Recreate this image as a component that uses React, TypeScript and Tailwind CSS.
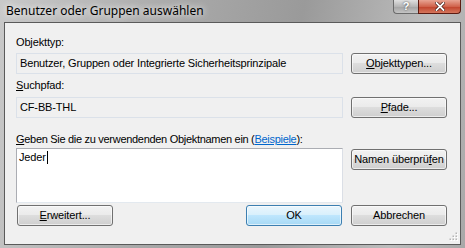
const ui = { fontFamily: '"Liberation Sans", Arial, sans-serif' };

const Btn = ({ children, primary }: { children: React.ReactNode; primary?: boolean }) => (
  <button
    className={
      primary
        ? "h-[21px] w-[96px] rounded-[3px] border border-[#3c7fb1] bg-[linear-gradient(#eaf6fd_0%,#d9f0fc_45%,#bee6fd_50%,#a7d9f5_100%)] text-[11px] leading-[13px] tracking-[-0.15px] text-black shadow-[inset_0_0_0_1px_rgba(255,255,255,0.6)]"
        : "h-[21px] w-[96px] rounded-[3px] border border-[#707070] bg-[linear-gradient(#f2f2f2_0%,#ebebeb_45%,#dddddd_50%,#cfcfcf_100%)] text-[11px] leading-[13px] tracking-[-0.15px] text-black shadow-[inset_0_0_0_1px_rgba(255,255,255,0.6)]"
    }
    style={ui}
  >
    {children}
  </button>
);

const Field = ({ text }: { text: string }) => (
  <div className="flex h-[21px] items-center border border-[#dbe1e9] bg-[#f0f0f0] px-[3px] text-[11px] text-black">
    {text}
  </div>
);

export default function App() {
  return (
    <div
      className="flex h-[248px] w-[465px] flex-col overflow-hidden bg-[linear-gradient(100deg,#c9c9c9_0%,#a9a9a9_35%,#9a9a9a_60%,#bdbdbd_85%,#a8a8a8_100%)]"
      style={ui}
    >
      {/* title bar */}
      <div className="flex h-[22px] shrink-0 items-start">
        <div
          className="pl-[6px] pt-[3px] text-[12px] leading-[15px] text-black [text-shadow:0_0_6px_rgba(255,255,255,0.9),0_0_10px_rgba(255,255,255,0.6)]"
          style={{ fontFamily: '"Noto Sans", "Open Sans", sans-serif' }}
        >
          Benutzer oder Gruppen auswählen
        </div>
        <div className="ml-auto mr-[4px] flex h-[14px]">
          <div className="flex w-[25px] items-center justify-center rounded-bl-[4px] border border-t-0 border-r-0 border-[#6b6b6b] bg-[linear-gradient(#e0e0e0,#b6b6b6_50%,#a3a3a3_51%,#c4c4c4)] text-[11px] font-bold leading-none text-white [text-shadow:0_0_2px_#333]">
            ?
          </div>
          <div className="flex w-[43px] items-center justify-center rounded-br-[4px] border border-t-0 border-[#5c1b12] bg-[linear-gradient(#e8a493,#d0634c_50%,#c0412a_51%,#d5765c)] text-[12px] font-bold leading-none text-white [text-shadow:0_0_2px_#4a0f08]">
            <svg width="10" height="9" viewBox="0 0 10 9">
              <path d="M1.5 1 L8.5 8 M8.5 1 L1.5 8" stroke="#3d1510" strokeWidth="3.2" strokeLinecap="square" />
              <path d="M1.5 1 L8.5 8 M8.5 1 L1.5 8" stroke="#ffffff" strokeWidth="1.8" strokeLinecap="square" />
            </svg>
          </div>
        </div>
      </div>

      {/* client area */}
      <div className="relative mx-[4px] h-[223px] border border-[#5a5a5a] bg-[#f0f0f0] pl-[11px] pr-[13px] pt-[13px] text-[11px] leading-[13px] tracking-[-0.15px] text-black">
        <div className="grid grid-cols-[327px_96px] gap-x-[8px]">
          <div className="col-span-2">Objekttyp:</div>
          <div className="mt-[4px]">
            <Field text="Benutzer, Gruppen oder Integrierte Sicherheitsprinzipale" />
          </div>
          <div className="mt-[4px]">
            <Btn>
              <u>O</u>bjekttypen...
            </Btn>
          </div>

          <div className="col-span-2 mt-[5px]">
            <u>S</u>uchpfad:
          </div>
          <div className="mt-[5px]">
            <Field text="CF-BB-THL" />
          </div>
          <div className="mt-[5px]">
            <Btn>
              <u>P</u>fade...
            </Btn>
          </div>

          <div className="col-span-2 mt-[15px] tracking-[-0.3px]">
            <u>G</u>eben Sie die zu verwendenden Objektnamen ein (
            <span className="text-[#0066cc] underline">Beispiele</span>):
          </div>
          <div className="mt-[2px]">
            <div className="flex h-[55px] items-start border border-[#abadb3] border-b-[#e3e9ef] border-r-[#dbdfe6] bg-white px-[2px] pt-[2px]">
              Jeder
              <span className="ml-[1px] inline-block h-[13px] w-[1px] bg-black" />
            </div>
          </div>
          <div className="mt-[3px]">
            <Btn>
              Namen überprü<u>f</u>en
            </Btn>
          </div>

          <div className="mt-[2px] flex justify-between">
            <div className="ml-[1px]">
              <Btn>
                <u>E</u>rweitert...
              </Btn>
            </div>
            <div className="mr-[1px]">
              <Btn primary>OK</Btn>
            </div>
          </div>
          <div className="mt-[2px]">
            <Btn>Abbrechen</Btn>
          </div>
        </div>

        {/* size grip */}
        <svg className="absolute bottom-[3px] right-[2px]" width="9" height="9" viewBox="0 0 9 9">
          {[
            [7, 1],
            [4, 4],
            [7, 4],
            [1, 7],
            [4, 7],
            [7, 7],
          ].map(([x, y]) => (
            <g key={`${x}-${y}`}>
              <rect x={x + 0.5} y={y + 0.5} width="1.5" height="1.5" fill="#ffffff" />
              <rect x={x - 0.5} y={y - 0.5} width="1.5" height="1.5" fill="#b5b5b5" />
            </g>
          ))}
        </svg>
      </div>
    </div>
  );
}
